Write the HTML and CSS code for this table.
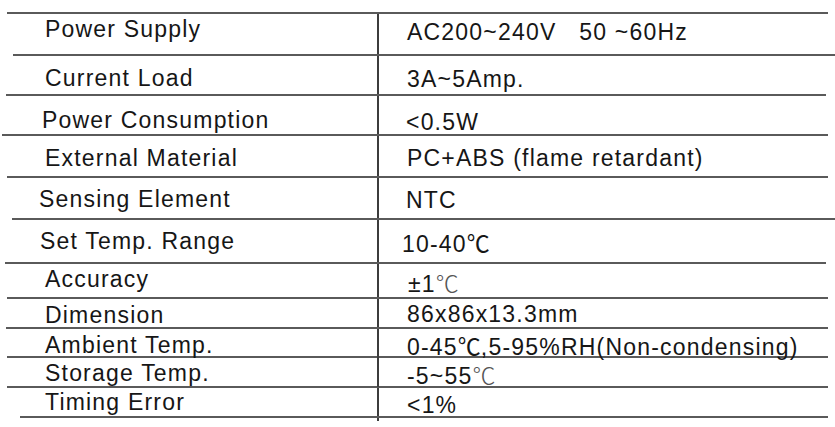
FILE: index.html
```html
<!DOCTYPE html>
<html lang="en">
<head>
<meta charset="utf-8">
<title>Specifications</title>
<link rel="stylesheet" href="styles.css">
</head>
<body>
<div class="spec">
  <div class="rule"></div>
  <div class="row row-1"><div class="key">Power Supply</div><div class="val">AC200~240V&nbsp;&nbsp; 50 ~60Hz</div></div>
  <div class="rule l13 r0"></div>
  <div class="row row-2"><div class="key">Current Load</div><div class="val">3A~5Amp.</div></div>
  <div class="rule l6 r9"></div>
  <div class="row row-3"><div class="key">Power Consumption</div><div class="val">&lt;0.5W</div></div>
  <div class="rule l2"></div>
  <div class="row row-4"><div class="key">External Material</div><div class="val">PC+ABS (flame retardant)</div></div>
  <div class="rule"></div>
  <div class="row row-5"><div class="key">Sensing Element</div><div class="val">NTC</div></div>
  <div class="rule l12 r0"></div>
  <div class="row row-6"><div class="key">Set Temp. Range</div><div class="val">10-40<span class="deg">℃</span></div></div>
  <div class="rule l5 r9"></div>
  <div class="row row-7"><div class="key">Accuracy</div><div class="val">±1<span class="deg-thin">℃</span></div></div>
  <div class="rule"></div>
  <div class="row row-8"><div class="key">Dimension</div><div class="val">86x86x13.3mm</div></div>
  <div class="rule l6"></div>
  <div class="row row-9"><div class="key">Ambient Temp.</div><div class="val">0-45<span class="deg">℃</span>,5-95%RH(Non-condensing)</div></div>
  <div class="rule"></div>
  <div class="row row-10"><div class="key">Storage Temp.</div><div class="val">-5~55<span class="deg-thin">℃</span></div></div>
  <div class="rule"></div>
  <div class="row row-11"><div class="key">Timing Error</div><div class="val">&lt;1%</div></div>
  <div class="rule l20"></div>
  <div class="tail"></div>
</div>
</body>
</html>
```

FILE: styles.css
```css
html, body {
  margin: 0;
  padding: 0;
  background: #ffffff;
}

.spec {
  width: 835px;
  padding-top: 12px;
  font-family: "Liberation Sans", Arial, "Noto Sans CJK SC", sans-serif;
  font-size: 23px;
  line-height: 22px;
  letter-spacing: 1.2px;
  color: #161616;
}

.rule {
  height: 2px;
  background: #5a5a5a;
  margin-left: 7px;
  margin-right: 7px;
}
.rule.l2 { margin-left: 2px; }
.rule.l5 { margin-left: 5px; }
.rule.l6 { margin-left: 6px; }
.rule.l12 { margin-left: 12px; }
.rule.l13 { margin-left: 13px; }
.rule.l20 { margin-left: 20px; }
.rule.r0 { margin-right: 0; }
.rule.r9 { margin-right: 9px; }

.row {
  display: grid;
  grid-template-columns: 377px 1fr;
  height: var(--h);
  --kx: 45px;
  --vx: 28px;
}

.key {
  padding: var(--pk) 0 0 var(--kx);
  white-space: nowrap;
}

.val {
  border-left: 2px solid #3c3c3c;
  padding: var(--pv) 0 0 var(--vx);
  white-space: nowrap;
}

.row-1 { --h: 40px; --pk: 4px; --pv: 7px; }
.row-2 { --h: 38px; --pk: 11px; --pv: 12px; }
.row-3 { --h: 38px; --pk: 13px; --pv: 15px; --kx: 42px; --vx: 27px; }
.row-4 { --h: 40px; --pk: 11px; --pv: 11px; }
.row-5 { --h: 40px; --pk: 10px; --pv: 11px; --kx: 39px; --vx: 27px; }
.row-6 { --h: 42px; --pk: 10px; --pv: 11px; --kx: 40px; --vx: 23px; }
.row-7 { --h: 33px; --pk: 4px; --pv: 7px; --vx: 29px; }
.row-8 { --h: 28px; --pk: 5px; --pv: 4px; }
.row-9 { --h: 27px; --pk: 5px; --pv: 5px; }
.row-10 { --h: 28px; --pk: 4px; --pv: 5px; }
.row-11 { --h: 28px; --pk: 3px; --pv: 6px; }

.deg {
  font-family: "Noto Sans CJK SC", "DejaVu Sans", sans-serif;
  letter-spacing: 0;
}

.deg-thin {
  font-family: "Noto Sans CJK SC", "DejaVu Sans", sans-serif;
  font-weight: 200;
  color: #555555;
  letter-spacing: 0;
}

.tail {
  width: 2px;
  height: 3px;
  margin-left: 377px;
  background: #3c3c3c;
}
```
